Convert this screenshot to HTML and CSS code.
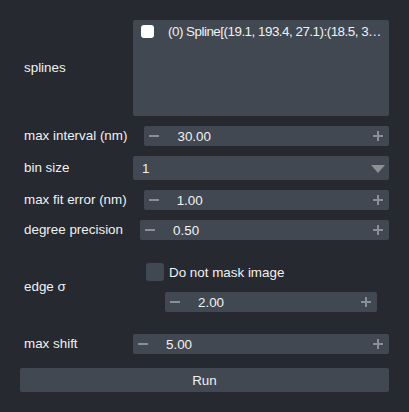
FILE: index.html
```html
<!DOCTYPE html>
<html>
<head>
<meta charset="utf-8">
<link rel="stylesheet" href="styles.css">
</head>
<body>
<div class="panel">
  <div class="row row-list">
    <div class="label">splines</div>
    <div class="list">
      <div class="list-item">
        <span class="check-white"></span>
        <span class="item-text">(0) Spline[(19.1, 193.4, 27.1):(18.5, 3</span><span class="ellipsis">…</span>
      </div>
    </div>
  </div>

  <div class="row">
    <div class="label">max interval (nm)</div>
    <div class="spin">
      <span class="minus"></span>
      <span class="value">30.00</span>
      <span class="plus"></span>
    </div>
  </div>

  <div class="row">
    <div class="label">bin size</div>
    <div class="combo">
      <span class="value-combo">1</span>
      <span class="tri"></span>
    </div>
  </div>

  <div class="row">
    <div class="label">max fit error (nm)</div>
    <div class="spin">
      <span class="minus"></span>
      <span class="value">1.00</span>
      <span class="plus"></span>
    </div>
  </div>

  <div class="row">
    <div class="label">degree precision</div>
    <div class="spin">
      <span class="minus"></span>
      <span class="value">0.50</span>
      <span class="plus"></span>
    </div>
  </div>

  <div class="row">
    <div class="label">edge σ</div>
    <div class="nested">
      <div class="check-row">
        <span class="check-dark"></span>
        <span class="check-text">Do not mask image</span>
      </div>
      <div class="spin spin-nested">
        <span class="minus"></span>
        <span class="value">2.00</span>
        <span class="plus"></span>
      </div>
    </div>
  </div>

  <div class="row">
    <div class="label">max shift</div>
    <div class="spin">
      <span class="minus"></span>
      <span class="value">5.00</span>
      <span class="plus"></span>
    </div>
  </div>

  <div class="run">Run</div>
</div>
</body>
</html>
```

FILE: styles.css
```css
html, body {
  margin: 0;
  padding: 0;
  background: #262930;
}
body {
  font-family: "Liberation Sans", Arial, sans-serif;
  font-size: 13.4px;
  color: #f0f1f2;
  width: 409px;
  height: 412px;
  overflow: hidden;
}
.panel {
  padding: 20px 20px 0 20px;
  display: flex;
  flex-direction: column;
  gap: 10px;
}
.row {
  display: flex;
  align-items: center;
  gap: 17px;
  margin-left: 4px;
}
.label {
  min-width: 92px;
  white-space: nowrap;
  line-height: 16px;
}
.list {
  flex: 1;
  height: 96px;
  background: #414851;
  border-radius: 2px;
  box-sizing: border-box;
  padding: 1px 8px;
  overflow: hidden;
}
.list-item {
  display: flex;
  align-items: center;
  height: 20px;
}
.check-white {
  width: 13px;
  height: 13px;
  background: #ffffff;
  border-radius: 3px;
  flex: none;
}
.item-text {
  margin-left: 14px;
  white-space: nowrap;
  letter-spacing: -0.5px;
}
.ellipsis {
  letter-spacing: 0;
  white-space: nowrap;
}
.spin {
  flex: 1;
  height: 20px;
  background: #414851;
  border-radius: 2px;
  display: flex;
  align-items: center;
  position: relative;
}
.minus {
  width: 10px;
  height: 2px;
  background: #8b8e94;
  margin-left: 5px;
  flex: none;
}
.value {
  margin-left: 18px;
  flex: 1;
}
.plus {
  width: 10px;
  height: 10px;
  margin-right: 6px;
  position: relative;
  flex: none;
}
.plus::before, .plus::after {
  content: "";
  position: absolute;
  background: #8b8e94;
}
.plus::before {
  left: 0;
  top: 4px;
  width: 10px;
  height: 2px;
}
.plus::after {
  left: 4px;
  top: 0;
  width: 2px;
  height: 10px;
}
.combo {
  flex: 1;
  height: 24px;
  background: #414851;
  border-radius: 2px;
  display: flex;
  align-items: center;
  padding-left: 9px;
}
.value-combo {
  flex: 1;
}
.tri {
  width: 0;
  height: 0;
  border-left: 7px solid transparent;
  border-right: 7px solid transparent;
  border-top: 8px solid #8d9095;
  margin-right: 4px;
  margin-top: 1px;
}
.nested {
  flex: 1;
  display: flex;
  flex-direction: column;
  padding: 13px 12px 12px 13px;
  gap: 11px;
}
.check-row {
  display: flex;
  align-items: center;
  height: 18px;
}
.check-dark {
  width: 18px;
  height: 18px;
  background: #414851;
  border-radius: 3px;
  flex: none;
}
.check-text {
  margin-left: 5px;
  white-space: nowrap;
}
.spin-nested {
  margin-left: 19px;
  flex: none;
}
.run {
  margin-top: 4px;
  height: 24px;
  background: #414851;
  border-radius: 2px;
  display: flex;
  align-items: center;
  justify-content: center;
}
```
